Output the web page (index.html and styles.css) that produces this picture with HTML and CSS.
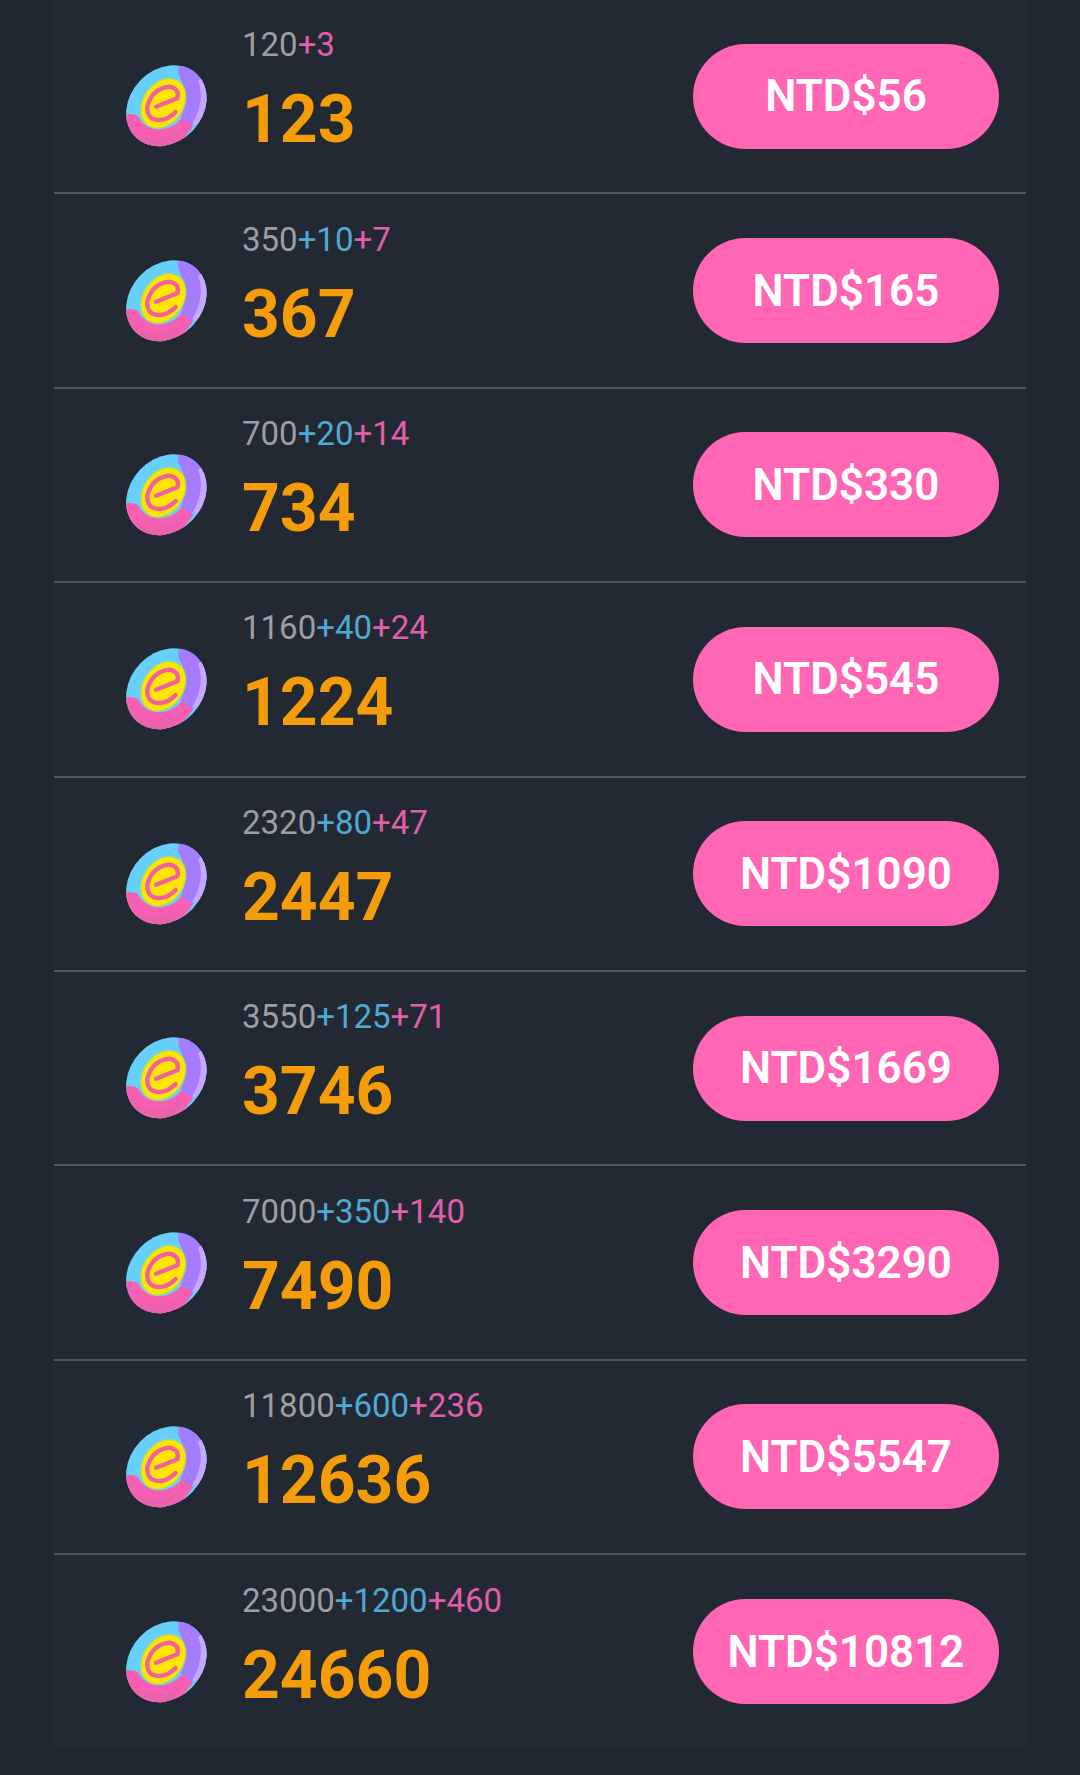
FILE: index.html
```html
<!DOCTYPE html>
<html lang="zh-Hant">
<head>
    <meta charset="UTF-8">
    <meta name="viewport" content="width=device-width, initial-scale=1.0">
    <title>Coins</title>
    <link rel="stylesheet" href="styles.css">
</head>
<body>

<svg class="defs" width="0" height="0">
    <defs>
        <clipPath id="coinClip">
            <ellipse cx="169" cy="167" rx="132" ry="109" transform="rotate(-46 169 167)"/>
        </clipPath>
        <symbol id="coin" viewBox="0 0 330 330">
            <g clip-path="url(#coinClip)">
                <rect width="330" height="330" fill="#66d0fa"/>
                <path d="M205 30 L205 72 Q240 130 212 205 L245 228 L320 160 L300 30 Z" fill="#a57bff"/>
                <path d="M264 92 Q288 150 246 224 L320 210 L320 60 Z" fill="#c6a8ff"/>
                <path d="M40 198 Q60 186 84 198 Q105 240 155 238 Q190 235 215 205 L250 228 L180 320 L20 290 Z" fill="#f760b2"/>
                <path d="M80 252 Q135 282 225 240 L170 300 L100 285 Z" fill="#e962ab"/>
            </g>
            <ellipse cx="160" cy="160" rx="80" ry="60" transform="rotate(-55 160 160)" fill="#ffe600" stroke="#b9dc55" stroke-width="4"/>
            <path d="M138 170 L202 145 Q210 116 178 110 Q126 116 112 170 Q110 210 150 210 Q176 208 197 186" fill="none" stroke="#f2619f" stroke-width="13" stroke-linecap="round" stroke-linejoin="round"/>
        </symbol>
    </defs>
</svg>

<div class="list">
    <div class="row">
        <svg class="coin"><use href="#coin"/></svg>
        <div class="amount">
            <div class="parts">120<span class="extra">+3</span></div>
            <div class="total">123</div>
        </div>
        <button class="price" type="button">NTD$56</button>
    </div>
    <div class="row">
        <svg class="coin"><use href="#coin"/></svg>
        <div class="amount">
            <div class="parts">350<span class="bonus">+10</span><span class="extra">+7</span></div>
            <div class="total">367</div>
        </div>
        <button class="price" type="button">NTD$165</button>
    </div>
    <div class="row">
        <svg class="coin"><use href="#coin"/></svg>
        <div class="amount">
            <div class="parts">700<span class="bonus">+20</span><span class="extra">+14</span></div>
            <div class="total">734</div>
        </div>
        <button class="price" type="button">NTD$330</button>
    </div>
    <div class="row">
        <svg class="coin"><use href="#coin"/></svg>
        <div class="amount">
            <div class="parts">1160<span class="bonus">+40</span><span class="extra">+24</span></div>
            <div class="total">1224</div>
        </div>
        <button class="price" type="button">NTD$545</button>
    </div>
    <div class="row">
        <svg class="coin"><use href="#coin"/></svg>
        <div class="amount">
            <div class="parts">2320<span class="bonus">+80</span><span class="extra">+47</span></div>
            <div class="total">2447</div>
        </div>
        <button class="price" type="button">NTD$1090</button>
    </div>
    <div class="row">
        <svg class="coin"><use href="#coin"/></svg>
        <div class="amount">
            <div class="parts">3550<span class="bonus">+125</span><span class="extra">+71</span></div>
            <div class="total">3746</div>
        </div>
        <button class="price" type="button">NTD$1669</button>
    </div>
    <div class="row">
        <svg class="coin"><use href="#coin"/></svg>
        <div class="amount">
            <div class="parts">7000<span class="bonus">+350</span><span class="extra">+140</span></div>
            <div class="total">7490</div>
        </div>
        <button class="price" type="button">NTD$3290</button>
    </div>
    <div class="row">
        <svg class="coin"><use href="#coin"/></svg>
        <div class="amount">
            <div class="parts">11800<span class="bonus">+600</span><span class="extra">+236</span></div>
            <div class="total">12636</div>
        </div>
        <button class="price" type="button">NTD$5547</button>
    </div>
    <div class="row">
        <svg class="coin"><use href="#coin"/></svg>
        <div class="amount">
            <div class="parts">23000<span class="bonus">+1200</span><span class="extra">+460</span></div>
            <div class="total">24660</div>
        </div>
        <button class="price" type="button">NTD$10812</button>
    </div>
</div>

</body>
</html>
```

FILE: styles.css
```css
body {
    font-family: Roboto, "Liberation Sans", sans-serif;
    background-color: #1e262f;
    margin: 0;
    padding: 0;
    height: 1775px;
    overflow: hidden;
}

.defs {
    display: block;
    height: 0;
}

.list {
    background-color: #222933;
    margin: 0 54px;
}

.row {
    display: flex;
    align-items: center;
    box-sizing: border-box;
    height: 194.4px;
    padding: 0 27px 0 56px;
    border-bottom: 2px solid #50565f;
}

.row:last-child {
    border-bottom: none;
    height: 193px;
}

.coin {
    width: 110px;
    height: 110px;
    margin-top: 18px;
    flex-shrink: 0;
}

.amount {
    margin-left: 22px;
    margin-bottom: 6px;
}

.parts {
    font-size: 33px;
    line-height: 38px;
    color: #9b9ea3;
}

.bonus {
    color: #4fa9d3;
}

.extra {
    color: #e05fa9;
}

.total {
    font-size: 66px;
    font-weight: 700;
    line-height: 80px;
    margin-top: 16px;
    color: #f59c0a;
}

.price {
    margin-left: auto;
    width: 306px;
    height: 105px;
    border: none;
    border-radius: 53px;
    background-color: #ff66b3;
    color: #fff;
    font-family: inherit;
    font-size: 44px;
    font-weight: 600;
    padding: 0;
}
```
